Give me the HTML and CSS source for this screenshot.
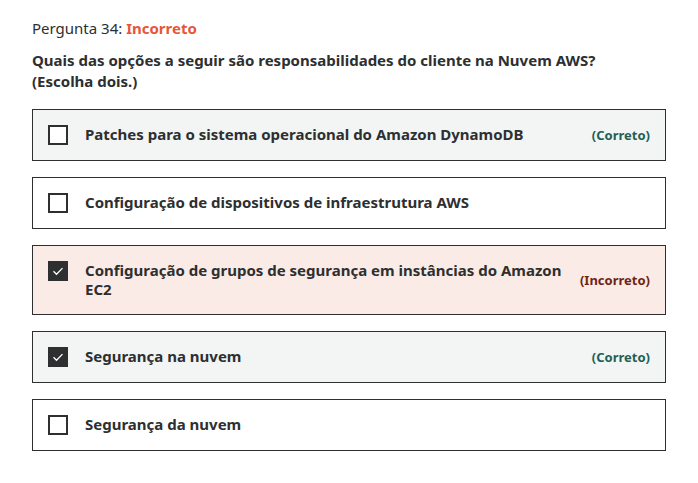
FILE: index.html
```html
<!DOCTYPE html>
<html lang="pt-BR">
<head>
<meta charset="utf-8">
<link rel="stylesheet" href="styles.css">
</head>
<body>
<div class="quiz">
  <div class="header">Pergunta 34: <span class="status">Incorreto</span></div>
  <div class="question">Quais das opções a seguir são responsabilidades do cliente na Nuvem AWS?<br>(Escolha dois.)</div>
  <ul class="answers">
    <li class="answer correct">
      <span class="box"></span>
      <span class="text">Patches para o sistema operacional do Amazon DynamoDB</span>
      <span class="label ok">(Correto)</span>
    </li>
    <li class="answer">
      <span class="box"></span>
      <span class="text">Configuração de dispositivos de infraestrutura AWS</span>
    </li>
    <li class="answer wrong">
      <span class="box checked"><svg viewBox="0 0 20 20" width="20" height="20"><path d="M5.5 10.3l3 3 6-6.2" fill="none" stroke="#fff" stroke-width="1.3"/></svg></span>
      <span class="text">Configuração de grupos de segurança em instâncias do Amazon EC2</span>
      <span class="label bad">(Incorreto)</span>
    </li>
    <li class="answer correct">
      <span class="box checked"><svg viewBox="0 0 20 20" width="20" height="20"><path d="M5.5 10.3l3 3 6-6.2" fill="none" stroke="#fff" stroke-width="1.3"/></svg></span>
      <span class="text">Segurança na nuvem</span>
      <span class="label ok">(Correto)</span>
    </li>
    <li class="answer">
      <span class="box"></span>
      <span class="text">Segurança da nuvem</span>
    </li>
  </ul>
</div>
</body>
</html>
```

FILE: styles.css
```css
* { box-sizing: border-box; }
body {
  margin: 0;
  background: #fff;
  font-family: "Noto Sans", "Open Sans", sans-serif;
  color: #2d2f31;
}
.quiz {
  padding: 17px 32px 0 32px;
  width: 698px;
}
.header {
  font-size: 15px;
  line-height: 22px;
  font-weight: 400;
}
.status {
  color: #e8563a;
  font-weight: 700;
}
.question {
  margin-top: 11px;
  font-size: 15px;
  line-height: 21px;
  font-weight: 700;
}
.answers {
  list-style: none;
  margin: 17px 0 0 0;
  padding: 0;
  display: flex;
  flex-direction: column;
  gap: 16px;
  width: 634px;
}
.answer {
  display: flex;
  align-items: flex-start;
  border: 1px solid #2d2f31;
  padding: 15px 15px;
  background: #fff;
}
.answer.correct { background: #f2f5f4; }
.answer.wrong { background: #fbebe6; }
.box {
  flex: none;
  width: 20px;
  height: 20px;
  border: 2px solid #2d2f31;
  margin-right: 17px;
  background: #fff;
  position: relative;
}
.box.checked {
  background: #2d2f31;
}
.box svg {
  position: absolute;
  left: -2px;
  top: -2px;
}
.text {
  flex: 1;
  font-size: 15px;
  line-height: 19px;
  font-weight: 700;
  padding-right: 12px;
}
.label {
  flex: none;
  align-self: center;
  font-size: 13px;
  line-height: 19px;
  font-weight: 700;
}
.label.ok { color: #1e6055; }
.label.bad { color: #6e2512; }
```
